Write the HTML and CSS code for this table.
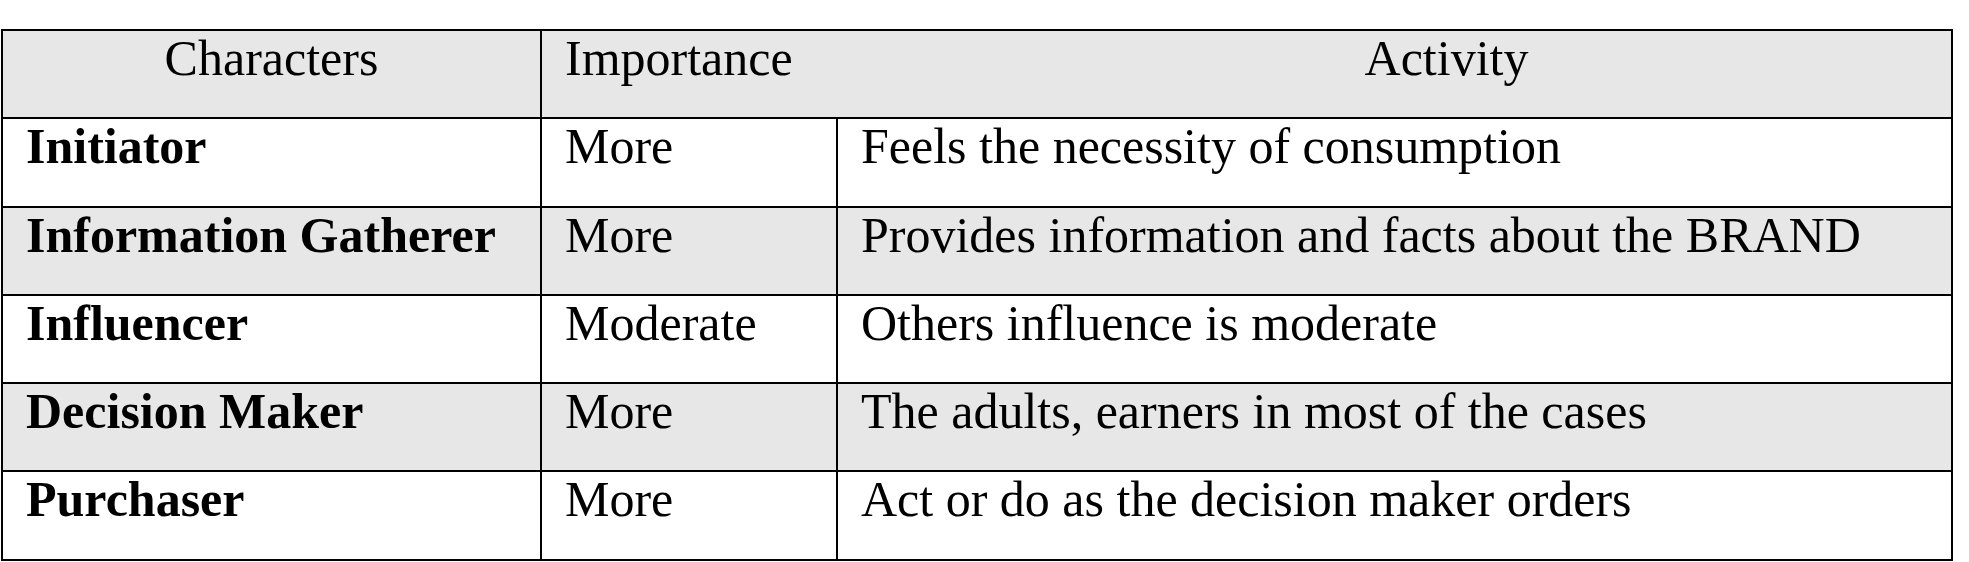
FILE: index.html
```html
<!DOCTYPE html>
<html lang="en">
<head>
<meta charset="utf-8">
<title>Buying roles</title>
<link rel="stylesheet" href="styles.css">
</head>
<body>
<table class="roles">
  <colgroup>
    <col class="c-char">
    <col class="c-imp">
    <col class="c-act">
  </colgroup>
  <thead>
    <tr class="row shaded">
      <th class="h-char">Characters</th>
      <th class="h-rest" colspan="2">
        <div class="h-split">
          <span class="h-imp">Importance</span>
          <span class="h-act">Activity</span>
        </div>
      </th>
    </tr>
  </thead>
  <tbody>
    <tr class="row">
      <td class="name">Initiator</td>
      <td>More</td>
      <td>Feels the necessity of consumption</td>
    </tr>
    <tr class="row shaded">
      <td class="name">Information Gatherer</td>
      <td>More</td>
      <td>Provides information and facts about the BRAND</td>
    </tr>
    <tr class="row">
      <td class="name">Influencer</td>
      <td>Moderate</td>
      <td>Others influence is moderate</td>
    </tr>
    <tr class="row shaded">
      <td class="name">Decision Maker</td>
      <td>More</td>
      <td>The adults, earners in most of the cases</td>
    </tr>
    <tr class="row">
      <td class="name">Purchaser</td>
      <td>More</td>
      <td>Act or do as the decision maker orders</td>
    </tr>
  </tbody>
</table>
</body>
</html>
```

FILE: styles.css
```css
html, body {
  margin: 0;
  padding: 0;
  background: #ffffff;
}

body {
  padding: 29px 0 0 1px;
  font-family: "Liberation Serif", "Times New Roman", serif;
  color: #000000;
}

.roles {
  border-collapse: collapse;
  table-layout: fixed;
  width: 1952px;
  font-size: 50px;
  line-height: 1.1;
}

.c-char { width: 539px; }
.c-imp { width: 296px; }
.c-act { width: auto; }

.roles th,
.roles td {
  border: 2px solid #000000;
  padding: 0 0 0 23px;
  height: 88.3px;
  vertical-align: top;
  text-align: left;
  font-weight: normal;
  white-space: nowrap;
  box-sizing: border-box;
}

.row.shaded th,
.row.shaded td {
  background: #e7e7e7;
}

.roles td.name {
  font-weight: bold;
}

.roles th.h-char {
  text-align: center;
  padding-left: 0;
}

.roles th.h-rest {
  padding-left: 0;
}

.h-split {
  display: grid;
  grid-template-columns: 400px 1fr;
}

.h-imp {
  padding-left: 23px;
}

.h-act {
  text-align: center;
}
```
